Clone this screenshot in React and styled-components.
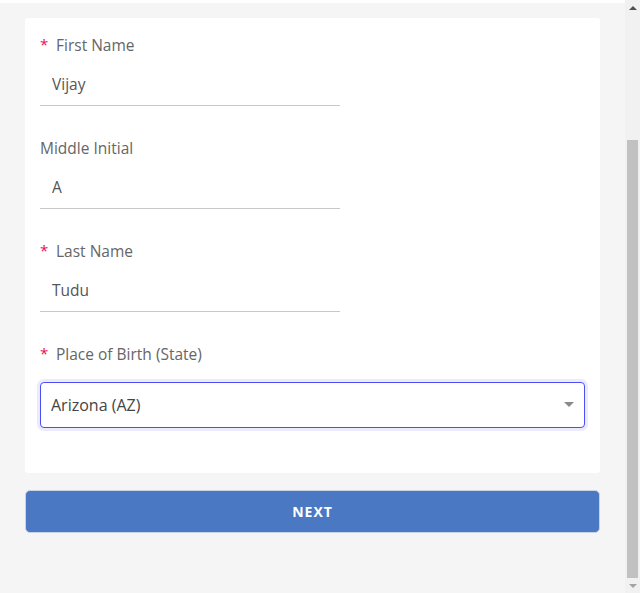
import React, { useState } from "react";
import styled, { createGlobalStyle } from "styled-components";

const GlobalStyle = createGlobalStyle`
  html, body {
    margin: 0;
    padding: 0;
    background: #f5f5f5;
    font-family: "Open Sans", Lato, sans-serif;
    overflow: hidden;
  }
  * {
    box-sizing: border-box;
  }
`;

const STATES = ["Alabama (AL)", "Alaska (AK)", "Arizona (AZ)", "Arkansas (AR)", "California (CA)"];

const App = () => {
  const [form, setForm] = useState({
    first: "Vijay",
    middle: "A",
    last: "Tudu",
    state: "Arizona (AZ)",
  });

  const update = (key) => (e) => setForm({ ...form, [key]: e.target.value });

  return (
    <>
      <GlobalStyle />
      <Frame>
        <Viewport>
          <HeaderEdge />
          <Page>
            <Card>
              <Field>
                <Label required>First Name</Label>
                <TextInput value={form.first} onChange={update("first")} />
              </Field>
              <Field>
                <Label>Middle Initial</Label>
                <TextInput value={form.middle} onChange={update("middle")} />
              </Field>
              <Field>
                <Label required>Last Name</Label>
                <TextInput value={form.last} onChange={update("last")} />
              </Field>
              <Field>
                <Label required>Place of Birth (State)</Label>
                <SelectWrap>
                  <Select value={form.state} onChange={update("state")}>
                    {STATES.map((s) => (
                      <option key={s}>{s}</option>
                    ))}
                  </Select>
                  <Caret />
                </SelectWrap>
              </Field>
            </Card>
            <NextButton>NEXT</NextButton>
          </Page>
        </Viewport>
        {/* the browser scrollbar, page scrolled to the bottom */}
        <ScrollTrack>
          <ScrollArrow up />
          <ScrollRail>
            <ScrollThumb />
          </ScrollRail>
          <ScrollArrow />
        </ScrollTrack>
      </Frame>
    </>
  );
};

const Frame = styled.div`
  display: flex;
  height: 100vh;
`;

const Viewport = styled.div`
  flex: 1;
  display: flex;
  flex-direction: column;
  overflow: hidden;
`;

const HeaderEdge = styled.div`
  height: 3px;
  background: #fff;
`;

const Page = styled.div`
  padding: 15px 25px 0;
  display: flex;
  flex-direction: column;
  gap: 17px;
`;

const Card = styled.div`
  background: #fff;
  border-radius: 3px;
  padding: 17px 15px 45px;
  display: flex;
  flex-direction: column;
  gap: 32px;
`;

const Field = styled.div`
  display: flex;
  flex-direction: column;
  gap: 9px;
`;

const Label = styled.label`
  font-size: 15.5px;
  line-height: 20px;
  color: #666;
  display: flex;
  align-items: center;

  &::before {
    content: ${(p) => (p.required ? '"*"' : "none")};
    color: #e8114f;
    font-size: 15px;
    width: 16px;
    position: relative;
    top: -1px;
  }
`;

const TextInput = styled.input`
  width: 300px;
  height: 42px;
  border: none;
  border-bottom: 1px solid #c8c8c8;
  padding: 0 12px 2px;
  font-family: inherit;
  font-size: 15.5px;
  color: #555;
  background: transparent;
  outline: none;
`;

const SelectWrap = styled.div`
  position: relative;
  margin-top: 9px;
`;

const Select = styled.select`
  appearance: none;
  width: 100%;
  height: 46px;
  border: 1px solid #4d4df5;
  border-radius: 4px;
  box-shadow: 0 0 0 3px #ebebfd;
  padding: 0 10px;
  font-family: inherit;
  font-size: 16px;
  color: #444;
  background: #fff;
  outline: none;
`;

const Caret = styled.span`
  position: absolute;
  right: 11px;
  top: 20px;
  width: 0;
  height: 0;
  border-left: 5px solid transparent;
  border-right: 5px solid transparent;
  border-top: 5px solid #8a8a8a;
  pointer-events: none;
`;

const NextButton = styled.button`
  height: 43px;
  width: 100%;
  border: 1px solid #c7d3e8;
  border-radius: 5px;
  background: #4b78c2;
  color: #fff;
  font-family: inherit;
  font-weight: 700;
  font-size: 14px;
  letter-spacing: 1px;
  cursor: pointer;
`;

const ScrollTrack = styled.div`
  width: 15px;
  background: #f1f1f1;
  display: flex;
  flex-direction: column;
`;

const ScrollArrow = styled.div`
  height: 15px;
  display: flex;
  align-items: center;
  justify-content: center;

  &::after {
    content: "";
    border-left: 4px solid transparent;
    border-right: 4px solid transparent;
    ${(p) => (p.up ? "border-bottom: 4px solid #505050;" : "border-top: 4px solid #a3a3a3;")}
  }
`;

const ScrollRail = styled.div`
  flex: 1;
  display: flex;
  flex-direction: column;
  justify-content: flex-end;
  padding: 0 2px;
`;

const ScrollThumb = styled.div`
  height: 438px;
  background: #c1c1c1;
`;

export default App;
